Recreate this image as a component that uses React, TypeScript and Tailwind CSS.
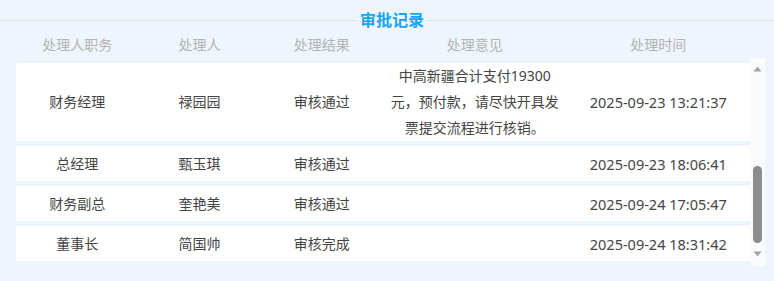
import React from "react";

type Row = {
  role: string;
  name: string;
  result: string;
  opinion?: string[];
  time: string;
};

const rows: Row[] = [
  {
    role: "财务经理",
    name: "禄园园",
    result: "审核通过",
    opinion: ["中高新疆合计支付19300", "元，预付款，请尽快开具发", "票提交流程进行核销。"],
    time: "2025-09-23 13:21:37",
  },
  { role: "总经理", name: "甄玉琪", result: "审核通过", time: "2025-09-23 18:06:41" },
  { role: "财务副总", name: "奎艳美", result: "审核通过", time: "2025-09-24 17:05:47" },
  { role: "董事长", name: "简国帅", result: "审核完成", time: "2025-09-24 18:31:42" },
];

const cols = "grid grid-cols-[2fr_2fr_2fr_3fr_3fr] text-center";

export default function App() {
  return (
    <div
      className="flex h-[281px] w-[774px] flex-col bg-[#eef5fc] text-[14px]"
      style={{ fontFamily: '"Noto Sans", "Noto Sans CJK SC", sans-serif' }}
    >
      {/* Title with rules on both sides */}
      <div className="mt-[8px] flex h-[24px] items-center gap-[3px]">
        <div className="h-px w-[357px] bg-[#e2ddd5]" />
        <span className="text-[16px] font-bold leading-none text-[#16a5f6]">审批记录</span>
        <div className="h-px flex-1 bg-[#e2ddd5]" />
      </div>

      {/* Column headings */}
      <div className={`${cols} ml-[16px] h-[24px] w-[734px] items-center text-[#b3b3b3]`}>
        <span>处理人职务</span>
        <span>处理人</span>
        <span>处理结果</span>
        <span>处理意见</span>
        <span>处理时间</span>
      </div>

      {/* Rows + scrollbar */}
      <div className="ml-[16px] mt-[2px] flex h-[208px]">
        <div className="flex w-[734px] flex-col gap-[5px] py-[5px] text-[#444]">
          {rows.map((r) => (
            <div
              key={r.time}
              className={`${cols} min-h-[35px] items-center bg-white leading-[26px]`}
            >
              <span>{r.role}</span>
              <span>{r.name}</span>
              <span>{r.result}</span>
              <span>
                {r.opinion?.map((line) => (
                  <span key={line} className="block">
                    {line}
                  </span>
                ))}
              </span>
              <span className="text-[14.5px]">{r.time}</span>
            </div>
          ))}
        </div>

        <div className="flex w-[15px] flex-col items-center bg-[#fafafa]">
          <svg width="9" height="6" viewBox="0 0 9 6" className="mt-[8px]">
            <path d="M4.5 0.5 L8.5 5.5 L0.5 5.5 Z" fill="#a3a3a3" />
          </svg>
          <div className="flex-1" />
          <div className="h-[77px] w-[9px] rounded-full bg-[#8c8c8c]" />
          <svg width="9" height="6" viewBox="0 0 9 6" className="mb-[9px] mt-[8px]">
            <path d="M0.5 0.5 L8.5 0.5 L4.5 5.5 Z" fill="#a3a3a3" />
          </svg>
        </div>
      </div>
    </div>
  );
}
